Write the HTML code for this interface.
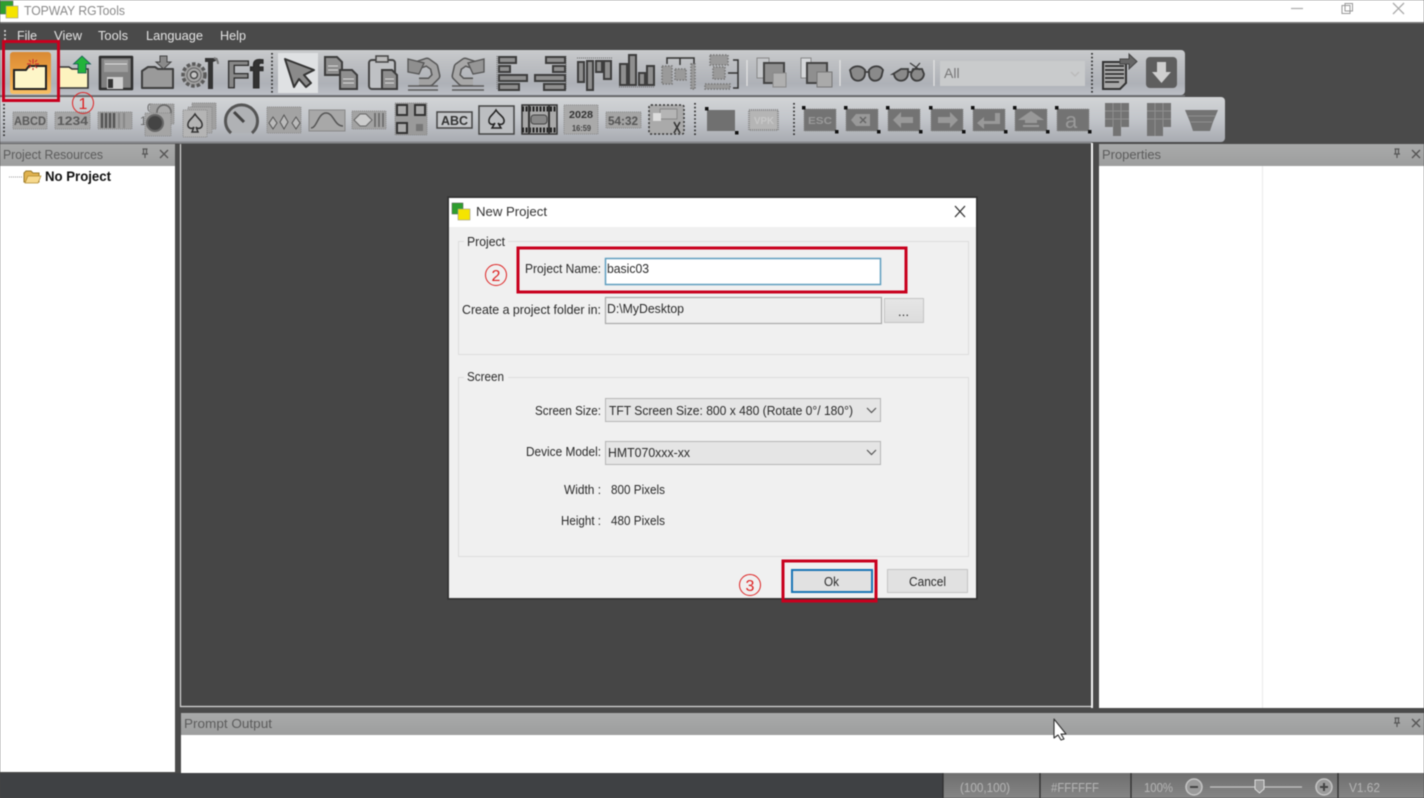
<!DOCTYPE html>
<html><head><meta charset="utf-8"><title>TOPWAY RGTools</title>
<style>
html,body{margin:0;padding:0;background:#4a4a4a;width:1424px;height:798px;overflow:hidden}
svg{display:block;filter:blur(.45px)}
text{font-family:"Liberation Sans","DejaVu Sans",sans-serif}
.ic{stroke:#3d3d3d;stroke-width:2;fill:#8f8f8f}
.dot{stroke:#777;stroke-width:1.5;stroke-dasharray:1.5 1.5;fill:#9a9a9a}
.sel{fill:#737373;stroke:#8a8a8a;stroke-dasharray:1 1}
.d{fill:#2a2a2a;font-size:12.5px}
</style></head><body>
<svg width="1424" height="798" viewBox="0 0 1424 798" xmlns="http://www.w3.org/2000/svg">
<defs>
<linearGradient id="t1" x1="0" y1="0" x2="0" y2="1"><stop offset="0" stop-color="#c9cbcd"/><stop offset=".25" stop-color="#bfc1c4"/><stop offset=".75" stop-color="#aeb1b7"/><stop offset="1" stop-color="#bcbfc6"/></linearGradient>
<linearGradient id="t2" x1="0" y1="0" x2="0" y2="1"><stop offset="0" stop-color="#d2d4d6"/><stop offset=".5" stop-color="#c2c5ca"/><stop offset="1" stop-color="#a8abb1"/></linearGradient>
<linearGradient id="or" x1="0" y1="0" x2="0" y2="1"><stop offset="0" stop-color="#d98a34"/><stop offset=".6" stop-color="#f0a545"/><stop offset="1" stop-color="#f6c067"/></linearGradient>
<linearGradient id="sb" x1="0" y1="0" x2="0" y2="1"><stop offset="0" stop-color="#6e6e6e"/><stop offset="1" stop-color="#868686"/></linearGradient>
<linearGradient id="hd" x1="0" y1="0" x2="0" y2="1"><stop offset="0" stop-color="#a9aaaa"/><stop offset="1" stop-color="#9d9e9e"/></linearGradient>
<linearGradient id="btn" x1="0" y1="0" x2="0" y2="1"><stop offset="0" stop-color="#e6e6e6"/><stop offset="1" stop-color="#dcdcdc"/></linearGradient>
<g id="seldoc"><rect x="-16" y="-11" width="32" height="22" class="sel"/><rect x="-18" y="-14" width="3.5" height="3.5" fill="#111"/><rect x="15" y="10" width="3.5" height="3.5" fill="#111"/></g>
<g id="pinx"><path d="M-2.5 -5h5M-1.5 -5v5M1.5 -5v5M-3 0h6M0 0v4" stroke="#555" stroke-width="1.2" fill="none"/><path d="M15 -4l8 8M23 -4l-8 8" stroke="#555" stroke-width="1.4"/></g>
</defs>

<!-- window -->
<rect width="1424" height="798" fill="#4a4a4a"/>
<rect width="1424" height="23" fill="#fff"/>
<rect y="22" width="1424" height="1.5" fill="#777"/>
<rect x="0" y="1" width="13" height="13" fill="#2e9e2e" stroke="#555" stroke-width=".5"/>
<rect x="6" y="6" width="12" height="12" fill="#f5e400" stroke="#999" stroke-width=".6"/>
<text x="24" y="15" font-size="13" fill="#8a8a8a" textLength="101" lengthAdjust="spacingAndGlyphs">TOPWAY RGTools</text>
<path d="M1291 8.5h12" stroke="#aaa" stroke-width="1.2"/>
<rect x="1342" y="5.5" width="8" height="8" fill="#fff" stroke="#999"/><rect x="1345" y="3.5" width="7.5" height="7.5" fill="none" stroke="#999"/>
<path d="M1393 3l11 11M1404 3l-11 11" stroke="#aaa" stroke-width="1.3"/>

<!-- menu -->
<path d="M5 30v2M5 34v2M5 38v2" stroke="#ddd" stroke-width="1.6"/>
<g font-size="12.5" fill="#e2e2e2" font-weight="400">
<text x="17" y="40" textLength="20" lengthAdjust="spacingAndGlyphs">File</text>
<text x="54" y="40" textLength="28" lengthAdjust="spacingAndGlyphs">View</text>
<text x="98" y="40" textLength="30" lengthAdjust="spacingAndGlyphs">Tools</text>
<text x="146" y="40" textLength="57" lengthAdjust="spacingAndGlyphs">Language</text>
<text x="220" y="40" textLength="26" lengthAdjust="spacingAndGlyphs">Help</text>
</g>

<!-- toolbars -->
<path d="M0 50H1181a4 4 0 0 1 4 4V91a4 4 0 0 1-4 4H0z" fill="url(#t1)"/>
<rect x="0" y="95" width="1185" height="1.5" fill="#6f7074"/>
<path d="M0 97H1221a4 4 0 0 1 4 4V138a4 4 0 0 1-4 4H0z" fill="url(#t2)"/>
<rect x="0" y="141.500" width="1092" height="2" fill="#85868a"/>
<g stroke="#222" stroke-width="1.6" stroke-dasharray="1.6 2.2">
<path d="M272 53v40M1092 53v40M4 104v34M695 103v34M794 103v34"/>
</g>
<path d="M747 60v26M840 60v26M934 60v26" stroke="#e4e4e4" stroke-width="1.2"/>

<!-- new (highlighted) -->
<rect x="10" y="52" width="41" height="42" rx="3" fill="url(#or)"/>
<path d="M14 89V70h12l3-4h17v23z" fill="#fdf6c8" stroke="#222" stroke-width="2"/>
<path d="M33 59v5M33 68v2M27 64h4M35 64h4M29 60l2 2M37 60l-2 2M29 68l2-2M37 68l-2-2" stroke="#c33" stroke-width="1.2"/>
<!-- open -->
<path d="M57 88V67h12l3 2h16v19z" fill="#fdf3bf"/>
<path d="M57 88h31V69H72l-3-2H58" fill="none" stroke="#333" stroke-width="1.6"/>
<path d="M82 56l8.500 8h-4.500v9h-8v-9h-4.500z" fill="#22b33a" stroke="#155" stroke-width=".8"/>
<!-- save -->
<path d="M100 57h32v32h-32z" fill="#808080" stroke="#2e2e2e" stroke-width="2.5" stroke-linejoin="round"/>
<rect x="104" y="60" width="24" height="12" fill="#9c9c9c"/><path d="M105 64h22" stroke="#ddd"/>
<rect x="107" y="77" width="16" height="12" fill="#cfcfcf"/><rect x="108" y="79" width="5" height="9" fill="#333"/>
<!-- import folder -->
<path d="M142 88V71l6-4h7l3 2h15v19z" fill="#9a9a9a" stroke="#3e3e3e" stroke-width="2" stroke-linejoin="round"/>
<path d="M160 56h7v6h4l-7.500 7-7.500-7h4z" fill="#8a8a8a" stroke="#444"/>
<!-- settings -->
<circle cx="194" cy="75" r="11" fill="#a0a0a0" stroke="#5a5a5a" stroke-width="3.500" stroke-dasharray="3.500 2"/>
<circle cx="194" cy="75" r="7" fill="#a8a8a8" stroke="#666" stroke-width="1"/>
<circle cx="194" cy="75" r="3.500" fill="#c5c5c5" stroke="#444" stroke-width="1.400"/>
<path d="M205 58h12l1 2-5 2v27h-5V62h-3z" fill="#333"/><path d="M214 58c3 1 4 3 4 6" stroke="#777" fill="none" stroke-width="2"/>
<!-- Ff -->
<text x="226" y="88" font-size="39" font-weight="700" fill="#888" stroke="#2d2d2d" stroke-width="1.300">F<tspan fill="#333">f</tspan></text>
<!-- arrow -->
<rect x="278" y="53" width="40" height="40" fill="#dfe1e3"/>
<path d="M285 59l29 11-10 5 7 8-5 4-7-8-5 8z" fill="#8a8a8a" stroke="#333" stroke-width="2" stroke-linejoin="round"/>
<!-- copy -->
<path d="M325 57h12l5 5v13h-17z" class="ic" stroke-width="1.800"/>
<path d="M340 70h12l5 5v14h-17z" class="ic" stroke-width="1.800"/>
<path d="M328 66h10M328 70h10M343 79h11M343 83h11" stroke="#ddd"/>
<!-- paste -->
<rect x="369" y="60" width="26" height="29" rx="3" fill="#bfc1c4" stroke="#444" stroke-width="2"/>
<rect x="376" y="56" width="12" height="6" fill="#bbb" stroke="#444" stroke-width="1.500"/>
<path d="M382 70h10l5 5v14h-15z" class="ic" stroke-width="1.800"/><path d="M385 79h9M385 83h9" stroke="#ddd"/>
<!-- undo / redo -->
<g fill="none" stroke-linejoin="round">
<path d="M415 66l12-4 7 5 2 9-6 6h-11" stroke="#555" stroke-width="9"/>
<path d="M415 66l12-4 7 5 2 9-6 6h-11" stroke="#a2a2a2" stroke-width="6"/>
<path d="M477 66l-12-4-7 5-2 9 6 6h11" stroke="#555" stroke-width="9"/>
<path d="M477 66l-12-4-7 5-2 9 6 6h11" stroke="#a8a8a8" stroke-width="6"/>
</g>
<path d="M408 59l16 4-5 11-11-2z" fill="#8f8f8f" stroke="#555" stroke-width="1.300"/>
<path d="M484 59l-16 4 5 11 11-2z" fill="#969696" stroke="#555" stroke-width="1.300"/>
<path d="M408 86h30M408 90h30M452 86h32M452 90h32" stroke="#5c5c5c" stroke-width="1.500"/>
<!-- align -->
<path d="M497 56v34M566 56v34" stroke="#666" stroke-dasharray="1 1"/>
<g class="ic" stroke-width="1.500">
<rect x="499" y="57" width="17" height="6"/><rect x="499" y="66" width="11" height="6"/><rect x="499" y="75" width="28" height="6"/><rect x="499" y="84" width="20" height="6"/>
<rect x="546" y="57" width="19" height="6"/><rect x="553" y="66" width="12" height="6"/><rect x="535" y="75" width="30" height="6"/><rect x="544" y="84" width="21" height="6"/>
<rect x="578" y="62" width="6" height="20"/><rect x="587" y="61" width="6" height="29"/><rect x="596" y="61" width="6" height="11"/><rect x="604" y="61" width="7" height="18"/>
<rect x="620" y="64" width="7" height="21"/><rect x="629" y="55" width="7" height="30"/><rect x="639" y="73" width="6" height="12"/><rect x="647" y="66" width="7" height="19"/>
</g>
<path d="M577 58h35" stroke="#666" stroke-dasharray="1 1"/><path d="M619 87h36" stroke="#666" stroke-dasharray="1 1"/>
<path d="M667 64v-6h27v6M680 58v7" stroke="#333" fill="none" stroke-width="1.500"/>
<rect x="662" y="66" width="10" height="18" class="dot"/><rect x="675" y="69" width="11" height="11" class="dot"/><rect x="691" y="64" width="4" height="25" class="dot"/>
<path d="M733 60h5v28h-5M728 73h10" stroke="#333" fill="none" stroke-width="1.500"/>
<rect x="710" y="55" width="18" height="10" class="dot"/><rect x="713" y="67" width="12" height="12" class="dot"/><rect x="705" y="84" width="25" height="5" class="dot"/>
<!-- order -->
<rect x="757" y="58" width="12" height="20" fill="#c5c7ca" stroke="#888"/><rect x="764" y="63" width="20" height="20" fill="#8f8f8f" stroke="#444" stroke-width="2"/><rect x="773" y="73" width="13" height="14" fill="#b0b0b0" stroke="#888"/>
<rect x="801" y="58" width="10" height="20" fill="#d5d7da" stroke="#888"/><rect x="807" y="63" width="20" height="20" fill="#8f8f8f" stroke="#444" stroke-width="2"/><rect x="817" y="72" width="15" height="15" fill="#aaa" stroke="#777"/>
<!-- glasses -->
<g stroke="#3d3d3d" stroke-width="1.800">
<path d="M850 70c4-5 11-5 15 0v4c-1 9-13 9-14 0zM869 74v-4c4-5 11-5 14 0l-1 4c-1 9-13 9-13 0zM865 72h4" fill="#8a8a8a"/>
<path d="M893 74l8-5h7v5c-1 9-13 9-14 0zM911 74l2-5h9l2 5c-1 9-13 9-13 0zM908 72h3" fill="#8a8a8a"/>
<path d="M920 63l-8 9M910 63l10 7" fill="none" stroke-width="1.300"/>
</g>
<!-- combo -->
<rect x="940" y="61" width="145" height="25" fill="#c9cbcc"/>
<text x="944" y="78" font-size="14" fill="#777">All</text>
<path d="M1071 72l4 4 4-4" stroke="#bbb" fill="none" stroke-width="1.500"/>
<!-- export -->
<path d="M1103 62h23v21l-6 6h-17z" fill="#a8a8a8" stroke="#333" stroke-width="2"/>
<path d="M1105 66h19M1105 70h19M1105 74h19M1105 78h19M1105 82h14" stroke="#222" stroke-width="1.500"/>
<path d="M1120 59h9v-5l8 7.500-8 7.500v-5h-9z" fill="#666" stroke="#444"/>
<!-- download -->
<rect x="1146" y="57" width="31" height="31" rx="4" fill="#5e5e5e"/>
<path d="M1157 62h9v10h5l-9.500 11-9.500-11h5z" fill="#cfcfcf"/>

<!-- toolbar 2 icons -->
<g font-weight="700" font-size="12" fill="#5a5a5a">
<rect x="13" y="112" width="34" height="17" fill="#a5a5a5" stroke="#888" stroke-dasharray="1 1"/>
<text x="14" y="125" textLength="32" lengthAdjust="spacingAndGlyphs">ABCD</text>
<rect x="55" y="112" width="35" height="17" fill="#a5a5a5" stroke="#888" stroke-dasharray="1 1"/>
<text x="57" y="125" textLength="31" lengthAdjust="spacingAndGlyphs">1234</text>
</g>
<rect x="98" y="112" width="34" height="17" fill="#a0a0a0" stroke="#888" stroke-dasharray="1 1"/>
<path d="M102 113v15M106 113v15M110 113v15M114 113v15" stroke="#555" stroke-width="2.500"/><path d="M119 113v15M124 113v15" stroke="#888" stroke-width="2"/>
<text x="147" y="112" font-size="12" fill="#666">0</text><text x="140" y="125" font-size="12" fill="#666">1</text>
<rect x="150" y="104" width="24" height="20" fill="#a0a0a0" stroke="#888" stroke-dasharray="1 1"/><circle cx="164" cy="112" r="7" fill="#aaa" stroke="#666" stroke-width="1.500"/>
<rect x="145" y="113" width="26" height="23" fill="#a5a5a5" stroke="#888" stroke-dasharray="1 1"/><circle cx="155" cy="123" r="8" fill="#444" stroke="#666" stroke-width="2"/>
<rect x="192" y="103" width="24" height="26" fill="#a0a0a0" stroke="#888" stroke-dasharray="1 1"/>
<rect x="188" y="107" width="24" height="26" fill="#a8a8a8" stroke="#888" stroke-dasharray="1 1"/>
<rect x="183" y="110" width="24" height="27" fill="#b5b5b5" stroke="#888" stroke-dasharray="1 1"/>
<path d="M195 114c-3 5-8 7-7 12 1 3 5 3 6 1l-2 5h6l-2-5c1 2 5 2 6-1 1-5-4-7-7-12z" fill="#b5b5b5" stroke="#333" stroke-width="1.500"/>
<path d="M231 133a16 16 0 1 1 21 0" fill="#b0b2b5" stroke="#555" stroke-width="3"/><path d="M234 112l10 10" stroke="#444" stroke-width="3"/>
<rect x="267" y="107" width="34" height="26" fill="#a3a3a3" stroke="#888" stroke-dasharray="1 1"/>
<path d="M273 117l-4 6 4 6 4-6zM284 115l-4 7 4 7 4-7zM296 117l-4 6 4 6 4-6z" fill="#bbb" stroke="#555"/>
<rect x="309" y="110" width="36" height="21" fill="#a8a8a8" stroke="#888"/><path d="M311 128c6 0 7-15 15-15s8 13 17 13" fill="none" stroke="#555" stroke-width="1.500"/>
<rect x="352" y="111" width="34" height="18" fill="#a3a3a3" stroke="#888" stroke-dasharray="1 1"/><path d="M354 120l6-6h6l6 6-6 6h-6z" fill="#ccc" stroke="#666"/><path d="M375 113v14M379 113v14M383 113v14" stroke="#666" stroke-width="1.500"/>
<rect x="395" y="103" width="32" height="32" fill="#9a9a9a" stroke="#888" stroke-dasharray="1 1"/>
<path d="M397 105h10v10h-10zM415 105h10v10h-10zM397 123h10v10h-10z" fill="#aaa" stroke="#333" stroke-width="2"/><rect x="416" y="124" width="7" height="7" fill="#777"/>
<rect x="437" y="112" width="35" height="16" fill="#c3c5c8" stroke="#444" stroke-width="1.500"/>
<text x="441" y="125" font-size="12.500" font-weight="700" fill="#333" textLength="27" lengthAdjust="spacingAndGlyphs">ABC</text>
<rect x="479" y="106" width="35" height="28" fill="#bcbec1" stroke="#444" stroke-width="1.500"/>
<path d="M496 110c-3 5-8 7-7 12 1 3 5 3 6 1l-3 5h9l-3-5c1 2 5 2 6-1 1-5-5-7-8-12z" fill="#bcbec1" stroke="#222" stroke-width="1.500"/>
<rect x="522" y="105" width="35" height="29" fill="#aaa" stroke="#333" stroke-width="1.500"/>
<path d="M522 109h35M522 130h35" stroke="#222" stroke-width="5" stroke-dasharray="2 1.500"/>
<path d="M529 105v29M549 105v29" stroke="#333" stroke-width="2"/><rect x="531" y="115" width="16" height="9" rx="3" fill="#888" stroke="#444"/>
<rect x="564" y="105" width="34" height="29" fill="#aaa" stroke="#888" stroke-dasharray="1 1"/>
<text x="569" y="118" font-size="10.500" font-weight="700" fill="#333" textLength="24" lengthAdjust="spacingAndGlyphs">2028</text>
<text x="572" y="131" font-size="8.500" font-weight="700" fill="#444" textLength="19" lengthAdjust="spacingAndGlyphs">16:59</text>
<rect x="606" y="112" width="35" height="16" fill="#a5a5a5" stroke="#888" stroke-dasharray="1 1"/>
<text x="608" y="125" font-size="11.500" font-weight="700" fill="#555" textLength="30" lengthAdjust="spacingAndGlyphs">54:32</text>
<rect x="649" y="105" width="35" height="29" rx="2" fill="#aaa" stroke="#333" stroke-width="1.500" stroke-dasharray="2 2"/>
<rect x="660" y="109" width="17" height="10" fill="#b5b5b5" stroke="#888"/><rect x="653" y="113" width="8" height="8" fill="#ddd"/><path d="M674 122l6 11M680 122l-6 11" stroke="#333" stroke-width="1.500"/>

<g transform="translate(722,120)"><rect x="-15" y="-10" width="28" height="21" fill="#707070"/><rect x="-17" y="-13" width="3.500" height="3.500" fill="#111"/><rect x="13" y="11" width="3.500" height="3.500" fill="#111"/></g>
<g transform="translate(764,120)"><rect x="-15" y="-10" width="29" height="20" fill="#b5b5b5" stroke="#888" stroke-width="2" stroke-dasharray="1 1"/><text x="-10" y="4" font-size="10" font-weight="700" fill="#c8c8c8" textLength="20" lengthAdjust="spacingAndGlyphs">VPK</text></g>
<g transform="translate(820,120)"><use href="#seldoc"/><text x="-12" y="4" font-size="10.500" font-weight="700" fill="#9a9a9a" textLength="24" lengthAdjust="spacingAndGlyphs">ESC</text></g>
<g transform="translate(862,120)"><use href="#seldoc"/><path d="M-11 0l5-6h14v12h-14z" fill="#999"/><path d="M-2 -3l6 6M4 -3l-6 6" stroke="#666" stroke-width="1.500"/></g>
<g transform="translate(904,120)"><use href="#seldoc"/><path d="M-11 0l8-8v5h12v6h-12v5z" fill="#999"/></g>
<g transform="translate(947,120)"><use href="#seldoc"/><path d="M11 0l-8-8v5h-12v6h12v5z" fill="#999"/></g>
<g transform="translate(989,120)"><use href="#seldoc"/><path d="M-12 3l7-6v4h11v-8h5v11h-16v5z" fill="#999"/></g>
<g transform="translate(1031,120)"><use href="#seldoc"/><path d="M0 -9l13 9h-7v3h-12v-3h-7zM-8 5h16v2h-16z" fill="#999"/></g>
<g transform="translate(1073,120)"><use href="#seldoc"/><text x="-8" y="8" font-size="22" fill="#999">a</text></g>
<g fill="#737373">
<path d="M1105 103h24v24h-8v9h-8v-9h-8z"/><path d="M1147 103h24v24h-8v9h-16z"/><path d="M1185 110h33l-5 12-3 9h-17l-3-9z"/>
</g>
<path d="M1105 111h24M1105 119h24M1113 103v24M1121 103v24M1147 111h24M1147 119h24M1155 103v33M1163 103v24M1188 116h27M1191 122h21" stroke="#8f8f8f"/>

<!-- left panel -->
<rect x="0" y="144" width="175" height="22" fill="url(#hd)"/>
<rect x="0" y="166" width="175" height="606" fill="#fff"/>
<text x="3" y="159" font-size="12.500" fill="#5c5c5c" textLength="100" lengthAdjust="spacingAndGlyphs">Project Resources</text>
<use href="#pinx" x="145" y="154"/>
<path d="M9 177h14" stroke="#999" stroke-dasharray="1 1"/>
<path d="M24 182v-9l2-2h5l2 2h6v9z" fill="#e0b24f" stroke="#9a7a2a"/><path d="M25 183l3-7h13l-3 7z" fill="#f7d98d" stroke="#b08a30" stroke-width=".7"/>
<text x="45" y="181" font-size="14" font-weight="700" fill="#111" textLength="66" lengthAdjust="spacingAndGlyphs">No Project</text>

<!-- center -->
<rect x="180" y="144" width="913" height="563" fill="#464646"/>
<path d="M180.500 144v562.500h912" fill="none" stroke="#d8d8d8" stroke-width="1.200"/>
<rect x="1091" y="143" width="2" height="565" fill="#f5f5f5"/>

<!-- right panel -->
<rect x="1099" y="144" width="325" height="22" fill="url(#hd)"/>
<rect x="1099" y="166" width="325" height="542" fill="#fff"/>
<rect x="1262" y="166" width="1" height="542" fill="#ebebeb"/>
<text x="1102" y="159" font-size="12.500" fill="#5c5c5c" textLength="59" lengthAdjust="spacingAndGlyphs">Properties</text>
<use href="#pinx" x="1397" y="154"/>

<!-- prompt -->
<rect x="181" y="713" width="1243" height="22" fill="url(#hd)"/>
<rect x="181" y="735" width="1243" height="38" fill="#fff"/>
<text x="184" y="728" font-size="12.500" fill="#5c5c5c" textLength="88" lengthAdjust="spacingAndGlyphs">Prompt Output</text>
<use href="#pinx" x="1397" y="723"/>
<path d="M1054 719v19l4-3 3 5 3-1-3-5h5z" fill="#fff" stroke="#333" stroke-width="1.100" stroke-linejoin="round"/>

<!-- status -->
<rect x="0" y="773" width="1424" height="25" fill="#3f4144"/>
<rect x="943" y="773" width="481" height="25" fill="url(#sb)"/>
<path d="M943 773v25M1040 773v25M1131 773v25M1338 773v25" stroke="#2f2f2f" stroke-width="1.300"/>
<g font-size="12.500" fill="#b5b5b5">
<text x="960" y="792" textLength="50" lengthAdjust="spacingAndGlyphs">(100,100)</text>
<text x="1051" y="792" textLength="48" lengthAdjust="spacingAndGlyphs">#FFFFFF</text>
<text x="1144" y="792" textLength="29" lengthAdjust="spacingAndGlyphs">100%</text>
<text x="1349" y="792" textLength="31" lengthAdjust="spacingAndGlyphs">V1.62</text>
</g>
<circle cx="1194" cy="787" r="8" fill="#9a9a9a" stroke="#c5c5c5" stroke-width="1.500"/><path d="M1190 787h8" stroke="#444" stroke-width="2"/>
<path d="M1210 787h92" stroke="#c5c5c5" stroke-width="1.300"/>
<path d="M1255 780h9v9l-4.500 4-4.500-4z" fill="#999" stroke="#ddd"/>
<circle cx="1324" cy="787" r="8" fill="#9a9a9a" stroke="#c5c5c5" stroke-width="1.500"/><path d="M1320 787h8M1324 783v8" stroke="#444" stroke-width="2"/>

<!-- dialog -->
<rect x="448" y="197" width="529" height="402" fill="none" stroke="#333" stroke-width="1.500"/>
<rect x="449" y="198" width="527" height="400" fill="#f0f0f0"/>
<rect x="449" y="198" width="527" height="29" fill="#fff"/>
<rect x="452" y="203" width="11" height="11" fill="#2e9e2e" stroke="#555" stroke-width=".5"/>
<rect x="458" y="209" width="12" height="11" fill="#f5e400" stroke="#999" stroke-width=".6"/>
<text x="476" y="216" font-size="13" fill="#333" textLength="71" lengthAdjust="spacingAndGlyphs">New Project</text>
<path d="M955 206l10 11M965 206l-10 11" stroke="#333" stroke-width="1.300"/>

<rect x="458.500" y="241.500" width="510" height="113" fill="none" stroke="#dedede"/>
<rect x="464" y="236" width="44" height="12" fill="#f0f0f0"/>
<text x="467" y="246" class="d" textLength="38" lengthAdjust="spacingAndGlyphs">Project</text>
<rect x="458.500" y="377.500" width="510" height="179" fill="none" stroke="#dedede"/>
<rect x="464" y="371" width="44" height="12" fill="#f0f0f0"/>
<text x="467" y="381" class="d" textLength="37" lengthAdjust="spacingAndGlyphs">Screen</text>

<text x="525" y="273" class="d" textLength="76" lengthAdjust="spacingAndGlyphs">Project Name:</text>
<rect x="605.500" y="258.500" width="275" height="26" fill="#fff" stroke="#5f9ebf" stroke-width="1.500"/>
<text x="607" y="273" class="d" textLength="42" lengthAdjust="spacingAndGlyphs">basic03</text>

<text x="462" y="314" class="d" textLength="139" lengthAdjust="spacingAndGlyphs">Create a project folder in:</text>
<rect x="605.500" y="297.500" width="276" height="26" fill="#efefef" stroke="#a9a9a9" stroke-width="1.200"/>
<text x="607" y="313" class="d" textLength="77" lengthAdjust="spacingAndGlyphs">D:\MyDesktop</text>
<rect x="884.500" y="298.500" width="39" height="24" fill="url(#btn)" stroke="#c4c4c4"/>
<text x="898" y="316" class="d" textLength="11" lengthAdjust="spacing">...</text>

<text x="535" y="415" class="d" textLength="66" lengthAdjust="spacingAndGlyphs">Screen Size:</text>
<rect x="605.500" y="398.500" width="275" height="23" fill="#e5e5e5" stroke="#b5b5b5"/>
<text x="609" y="415" class="d" textLength="244" lengthAdjust="spacingAndGlyphs">TFT Screen Size: 800 x 480 (Rotate 0°/ 180°)</text>
<path d="M867 408l4.500 4.500 4.500-4.500" fill="none" stroke="#555" stroke-width="1.200"/>

<text x="526" y="456" class="d" textLength="75" lengthAdjust="spacingAndGlyphs">Device Model:</text>
<rect x="605.500" y="441.500" width="275" height="23" fill="#e5e5e5" stroke="#b5b5b5"/>
<text x="608" y="457" class="d" textLength="82" lengthAdjust="spacingAndGlyphs">HMT070xxx-xx</text>
<path d="M867 450l4.500 4.500 4.500-4.500" fill="none" stroke="#555" stroke-width="1.200"/>

<text x="564" y="494" class="d" textLength="37" lengthAdjust="spacingAndGlyphs">Width :</text>
<text x="611" y="494" class="d" textLength="54" lengthAdjust="spacingAndGlyphs">800 Pixels</text>
<text x="561" y="525" class="d" textLength="40" lengthAdjust="spacingAndGlyphs">Height :</text>
<text x="611" y="525" class="d" textLength="54" lengthAdjust="spacingAndGlyphs">480 Pixels</text>

<rect x="792" y="570" width="80" height="22" fill="#e1e1e1" stroke="#1a75b5" stroke-width="2"/>
<text x="824" y="586" class="d" textLength="15" lengthAdjust="spacingAndGlyphs">Ok</text>
<rect x="887.500" y="569.500" width="80" height="23" fill="#e1e1e1" stroke="#c4c4c4"/>
<text x="909" y="586" class="d" textLength="37" lengthAdjust="spacingAndGlyphs">Cancel</text>

<!-- annotations -->
<g fill="none" stroke="#c8001e" stroke-width="3">
<rect x="3.500" y="41.500" width="55" height="59"/>
<rect x="518" y="248" width="388" height="44"/>
<rect x="783" y="561" width="93" height="40"/>
</g>
<g fill="none" stroke="#d22" stroke-width="1">
<circle cx="83" cy="103" r="10.500"/><circle cx="496" cy="275" r="10.500"/><circle cx="750" cy="585" r="10.500"/>
</g>
<g fill="#d22" font-size="16" text-anchor="middle">
<text x="83" y="109">1</text><text x="496" y="281">2</text><text x="750" y="591">3</text>
</g>
</svg>
</body></html>
